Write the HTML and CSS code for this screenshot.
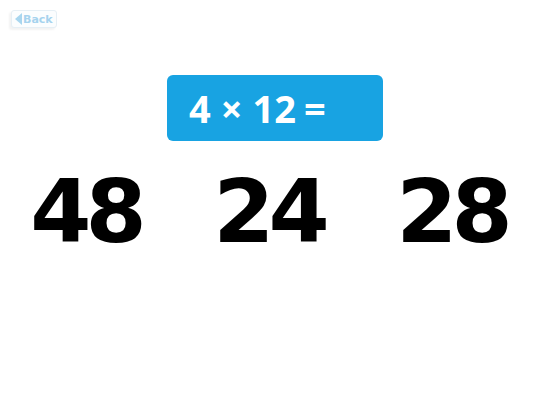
FILE: index.html
```html
<!DOCTYPE html>
<html>
<head>
<meta charset="utf-8">
<link rel="stylesheet" href="styles.css">
</head>
<body>
<div class="page">
  <div class="topbar">
    <button class="back"><span class="arrow"></span>Back</button>
  </div>
  <div class="question">
    <span class="q-num">4</span>
    <span class="q-op">×</span>
    <span class="q-num">12</span>
    <span class="q-eq">=</span>
  </div>
  <div class="answers">
    <div class="answer">48</div>
    <div class="answer">24</div>
    <div class="answer">28</div>
  </div>
</div>
</body>
</html>
```
FILE: styles.css
```css
html, body {
  margin: 0;
  padding: 0;
  background: #ffffff;
}
.page {
  width: 552px;
  height: 414px;
  display: flex;
  flex-direction: column;
  align-items: center;
}
.topbar {
  align-self: stretch;
  padding: 10px 0 0 11px;
  height: 18px;
}
.back {
  display: flex;
  align-items: center;
  height: 18px;
  padding: 0 3px 0 3px;
  border: 1px solid #e6eff5;
  border-radius: 3px;
  background: #fbfdfe;
  color: #a6d3ee;
  font-family: "DejaVu Sans", sans-serif;
  font-weight: bold;
  font-size: 11px;
  box-shadow: -2px 2px 2px rgba(0,0,0,0.05);
}
.arrow {
  width: 0;
  height: 0;
  border-top: 6px solid transparent;
  border-bottom: 6px solid transparent;
  border-right: 7px solid #a8d6ef;
  margin-right: 1px;
}
.question {
  margin-top: 47px;
  width: 216px;
  height: 66px;
  box-sizing: border-box;
  background: #18a3e2;
  border-radius: 6px;
  color: #ffffff;
  font-family: "Open Sans", sans-serif;
  font-weight: bold;
  font-size: 38px;
  line-height: 66px;
  padding-left: 22px;
  margin-left: -2px;
  display: flex;
  align-items: center;
}
.q-op {
  margin-left: 10px;
  margin-right: 10px;
}
.q-eq {
  margin-left: 8px;
}
.answers {
  display: grid;
  grid-template-columns: 183px 183px 183px;
  justify-content: center;
  padding-right: 11px;
  align-self: stretch;
  margin-top: 18px;
}
.answer {
  text-align: center;
  font-family: "DejaVu Sans", sans-serif;
  font-weight: bold;
  font-size: 88px;
  line-height: 106px;
  letter-spacing: -6px;
  text-indent: -4px;
  color: #000000;
}
```
